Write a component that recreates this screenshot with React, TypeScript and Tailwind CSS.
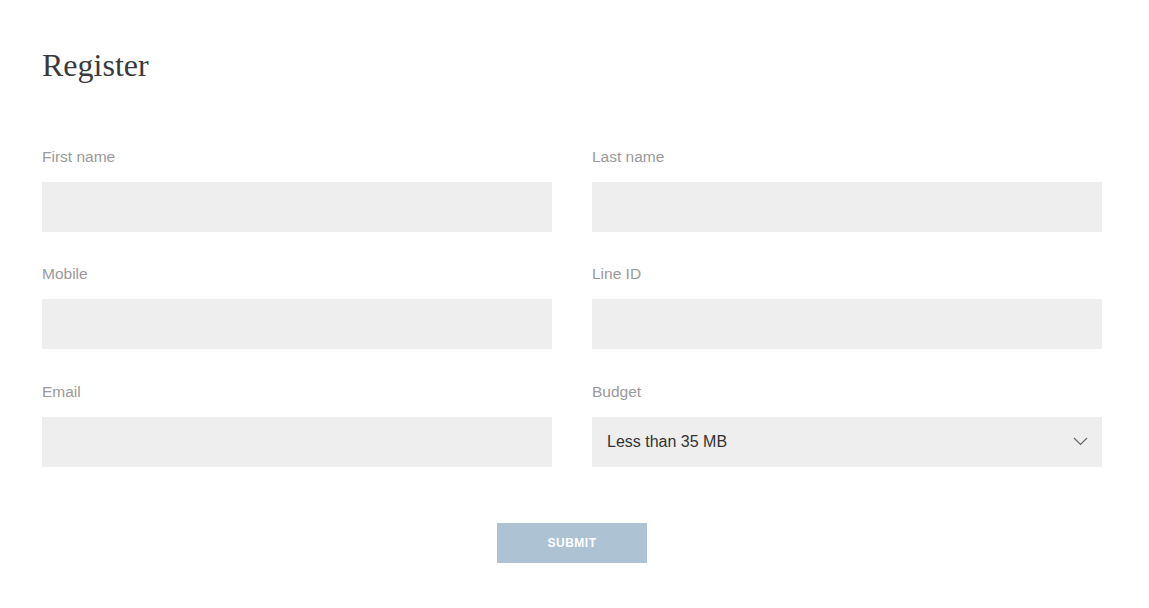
import { useState } from "react";

type Field = {
  id: string;
  label: string;
  className?: string;
};

const FIELDS: Field[] = [
  { id: "firstName", label: "First name" },
  { id: "lastName", label: "Last name" },
  { id: "mobile", label: "Mobile" },
  { id: "lineId", label: "Line ID" },
  { id: "email", label: "Email", className: "mt-px" },
];

const BUDGETS = ["Less than 35 MB", "35 - 50 MB", "50 - 100 MB", "More than 100 MB"];

function Label({ htmlFor, children }: { htmlFor: string; children: React.ReactNode }) {
  return (
    <label
      htmlFor={htmlFor}
      className="block h-5 text-[15.5px] leading-5 text-[#9a9a9a] [font-family:'Liberation_Sans',Arial,sans-serif]"
    >
      {children}
    </label>
  );
}

export default function App() {
  const [form, setForm] = useState<Record<string, string>>({
    firstName: "",
    lastName: "",
    mobile: "",
    lineId: "",
    email: "",
    budget: BUDGETS[0],
  });

  return (
    <div className="min-h-screen bg-white px-[42px] pt-[45px]">
      <div className="w-[1060px]">
        <h1 className="text-[32px] leading-10 text-[#3a3a3a] [font-family:'Liberation_Serif','Times_New_Roman',serif]">
          Register
        </h1>

        <form
          className="mt-[62px] grid grid-cols-2 gap-x-10 gap-y-8"
          onSubmit={(e) => e.preventDefault()}
        >
          {FIELDS.map((field) => (
            <div key={field.id} className={field.className}>
              <Label htmlFor={field.id}>{field.label}</Label>
              <input
                id={field.id}
                value={form[field.id]}
                onChange={(e) => setForm((prev) => ({ ...prev, [field.id]: e.target.value }))}
                className="mt-[15px] block h-[50px] w-full bg-[#eeeeee] px-[15px] text-base text-[#333333] outline-none [font-family:'Liberation_Sans',Arial,sans-serif]"
              />
            </div>
          ))}

          <div className="mt-px">
            <Label htmlFor="budget">Budget</Label>
            <div className="relative mt-[15px]">
              <select
                id="budget"
                value={form.budget}
                onChange={(e) => setForm((prev) => ({ ...prev, budget: e.target.value }))}
                className="block h-[50px] w-full appearance-none bg-[#eeeeee] px-[15px] text-base text-[#333333] outline-none [font-family:'Liberation_Sans',Arial,sans-serif]"
              >
                {BUDGETS.map((b) => (
                  <option key={b} value={b}>
                    {b}
                  </option>
                ))}
              </select>
              <svg
                className="pointer-events-none absolute right-[14px] top-[19px]"
                width="15"
                height="10"
                viewBox="0 0 15 10"
                fill="none"
              >
                <path d="M1 2 L7.5 8.5 L14 2" stroke="#666666" strokeWidth="1.2" />
              </svg>
            </div>
          </div>

          <div className="col-span-2 mt-6 flex justify-center">
            <button
              type="submit"
              className="h-10 w-[150px] bg-[#adc2d3] text-xs font-bold tracking-[0.5px] text-white [font-family:'Liberation_Sans',Arial,sans-serif]"
            >
              SUBMIT
            </button>
          </div>
        </form>
      </div>
    </div>
  );
}
